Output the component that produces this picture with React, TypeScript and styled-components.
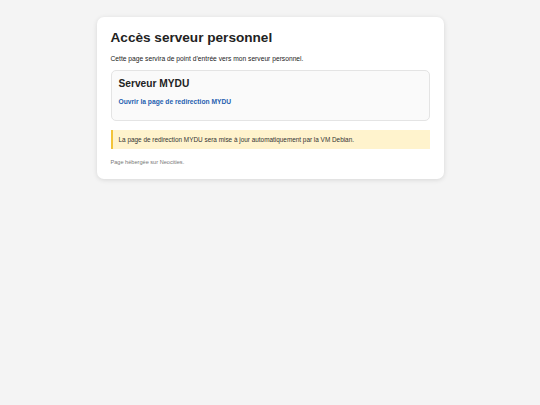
import React from "react";
import styled, { createGlobalStyle } from "styled-components";

const GlobalStyle = createGlobalStyle`
  html, body {
    margin: 0;
    padding: 0;
    background: #f4f4f4;
    font-family: "Liberation Sans", Arial, sans-serif;
    color: #222;
  }
`;

const App = () => (
  <>
    <GlobalStyle />
    <Page>
      <Card>
        <Title>Accès serveur personnel</Title>
        <Intro>Cette page servira de point d’entrée vers mon serveur personnel.</Intro>
        <ServerBox>
          <ServerTitle>Serveur MYDU</ServerTitle>
          <ServerLink href="#">Ouvrir la page de redirection MYDU</ServerLink>
        </ServerBox>
        <Notice>
          La page de redirection MYDU sera mise à jour automatiquement par la VM Debian.
        </Notice>
        <Footer>Page hébergée sur Neocities.</Footer>
      </Card>
    </Page>
  </>
);

export default App;

const Page = styled.div`
  padding: 17px 0;
`;

const Card = styled.div`
  box-sizing: border-box;
  width: 347px;
  margin: 0 auto;
  background: #fff;
  border-radius: 7px;
  box-shadow: 0 1px 5px rgba(0, 0, 0, 0.12);
  padding: 13px 14px 13px;
`;

const Title = styled.h1`
  margin: 0;
  font-size: 13.6px;
  font-weight: 700;
  color: #222;
  line-height: 16px;
`;

const Intro = styled.p`
  margin: 8px 0 0;
  font-size: 6.7px;
  line-height: 10px;
  color: #222;
`;

const ServerBox = styled.div`
  margin-top: 6px;
  background: #fafafa;
  border: 1px solid #e4e4e4;
  border-radius: 5px;
  padding: 7px 7px 12px;
`;

const ServerTitle = styled.h2`
  margin: 0;
  font-size: 10.2px;
  font-weight: 700;
  line-height: 12px;
  color: #222;
`;

const ServerLink = styled.a`
  display: inline-block;
  margin-top: 6px;
  font-size: 6.7px;
  font-weight: 700;
  line-height: 10px;
  color: #1f5fb0;
  text-decoration: none;
`;

const Notice = styled.div`
  margin-top: 9px;
  background: #fff3cd;
  border-left: 2px solid #f2c43a;
  padding: 5px 6px;
  font-size: 6.4px;
  line-height: 9px;
  color: #333;
`;

const Footer = styled.p`
  margin: 9px 0 0;
  font-size: 5.6px;
  line-height: 8px;
  color: #777;
`;
